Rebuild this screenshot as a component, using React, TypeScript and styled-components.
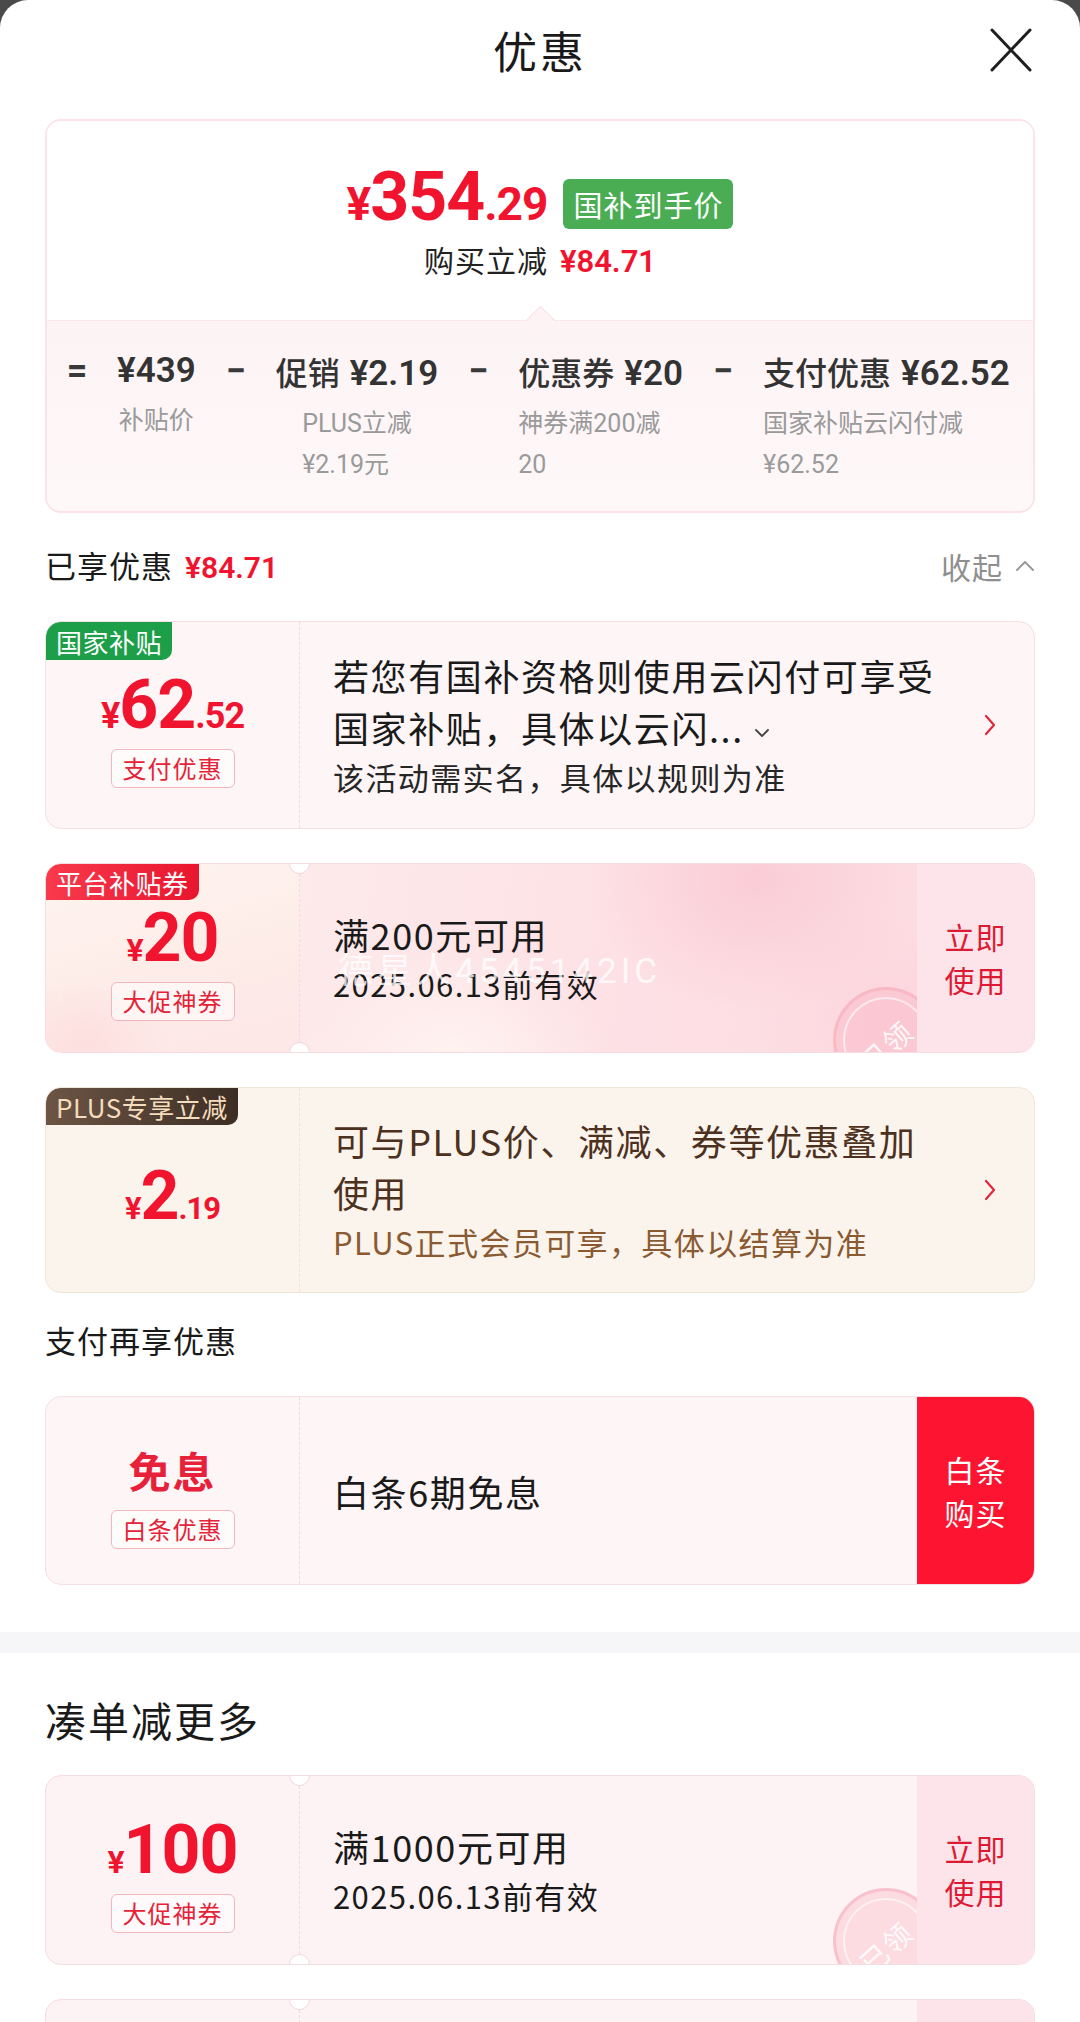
import React from 'react';
import styled, { createGlobalStyle, css } from 'styled-components';

const CJK = `"Noto Sans CJK SC", "Noto Sans", sans-serif`;
const NUM = `Roboto, "Liberation Sans", "Noto Sans CJK SC", sans-serif`;
const RED = '#f0142f';

const GlobalStyle = createGlobalStyle`
  html, body { margin: 0; padding: 0; background: #4a4a4a; }
  body { font-family: ${CJK}; color: #1a1a1a; -webkit-font-smoothing: antialiased; }
  * { box-sizing: border-box; }
`;

const Sheet = styled.div`
  width: 1080px;
  min-height: 2022px;
  background: #fff;
  border-radius: 28px 28px 0 0;
  overflow: hidden;
`;

const Header = styled.header`
  display: grid;
  grid-template-columns: 1fr auto 1fr;
  align-items: center;
  height: 100px;
`;

const Title = styled.h1`
  margin: 0;
  font-size: 44px;
  font-weight: 400;
  letter-spacing: 3px;
  color: #1a1a1a;
  line-height: 1;
`;

const CloseButton = styled.button`
  justify-self: end;
  margin-right: 48px;
  width: 42px;
  height: 44px;
  padding: 0;
  border: 0;
  background: none;
  display: flex;
`;

const Content = styled.div`
  padding: 0 45px;
`;

const Summary = styled.section`
  margin-top: 19px;
  border: 2px solid #fbe3e7;
  border-radius: 16px;
  overflow: hidden;
`;

const SummaryTop = styled.div`
  height: 199px;
  padding-top: 58px;
  display: flex;
  flex-direction: column;
  align-items: center;
  background: #fff;
`;

const PriceLine = styled.div`
  display: flex;
  align-items: flex-end;
  height: 50px;
`;

const BigPrice = styled.div`
  font-family: ${NUM};
  font-weight: 700;
  color: ${RED};
  line-height: 1;
  display: flex;
  align-items: baseline;
  margin-bottom: -2px;
  letter-spacing: -1px;
`;

const PriceUnit = styled.span<{ $size: number }>`
  font-size: ${(p) => p.$size}px;
`;

const GreenBadge = styled.span`
  margin-left: 16px;
  height: 50px;
  padding: 0 10px;
  border-radius: 6px;
  background: #4aad53;
  color: #fff;
  font-size: 29px;
  line-height: 50px;
  letter-spacing: 1px;
`;

const SaveLine = styled.div`
  margin-top: 12px;
  font-size: 30px;
  line-height: 36px;
  color: #222;
  letter-spacing: 1px;
`;

const RedNum = styled.span<{ $size?: number }>`
  font-family: ${NUM};
  color: ${RED};
  font-weight: 600;
  font-size: ${(p) => p.$size ?? 31}px;
  margin-left: 12px;
  letter-spacing: 0;
`;

const Breakdown = styled.div`
  position: relative;
  height: 191px;
  padding: 28px 0 0 17px;
  display: flex;
  align-items: flex-start;
  gap: 27px;
  background: linear-gradient(#fdf3f5, #fef8f9);
  border-top: 1.5px solid #fbe6ea;

  &::before {
    content: '';
    position: absolute;
    top: -11px;
    left: 50%;
    width: 20px;
    height: 20px;
    margin-left: -10px;
    transform: rotate(45deg);
    background: #fdf3f5;
    border-left: 1.5px solid #fbe0e5;
    border-top: 1.5px solid #fbe0e5;
  }
`;

const Op = styled.span`
  width: 26px;
  text-align: center;
  font-family: ${NUM};
  font-size: 36px;
  font-weight: 700;
  line-height: 44px;
  color: #3a3a3a;
`;

const Item = styled.div`
  display: flex;
  flex-direction: column;
  align-items: center;
`;

const ItemMain = styled.div`
  display: flex;
  align-items: baseline;
  gap: 10px;
  font-size: 32px;
  line-height: 44px;
  color: #333;
  white-space: nowrap;
  font-weight: 500;
`;

const ItemNum = styled.span`
  font-family: ${NUM};
  font-weight: 600;
  font-size: 35px;
`;

const ItemSub = styled.div<{ $align: 'center' | 'flex-start' }>`
  align-self: ${(p) => p.$align};
  margin-top: 7px;
  font-family: ${NUM};
  font-size: 25px;
  line-height: 41px;
  color: #9a9a9a;
  white-space: nowrap;
`;

const EnjoyRow = styled.div`
  margin-top: 25px;
  height: 56px;
  display: flex;
  align-items: center;
  justify-content: space-between;
`;

const SectionLabel = styled.div`
  font-size: 31px;
  line-height: 48px;
  color: #1a1a1a;
  letter-spacing: 1px;
`;

const Collapse = styled.div`
  display: flex;
  align-items: center;
  gap: 12px;
  font-size: 30px;
  color: #8f8f8f;
  letter-spacing: 1px;
`;

const CardList = styled.div`
  margin-top: 27px;
  display: flex;
  flex-direction: column;
  gap: 34px;
`;

type Tone = 'rose' | 'cream' | 'promo' | 'coupon';

const toneStyles: Record<Tone, ReturnType<typeof css>> = {
  rose: css`background: #fdf5f6; border-color: #f6e0e3;`,
  cream: css`background: #fbf4ed; border-color: #f2e4d7;`,
  promo: css`background: #fde8ea; border-color: #f7dce0;`,
  coupon: css`background: #fdf3f5; border-color: #f5dde1;`,
};

const Card = styled.article<{ $tone: Tone; $h: number }>`
  position: relative;
  display: grid;
  grid-template-columns: 254px 1fr auto;
  height: ${(p) => p.$h}px;
  border: 1.5px solid;
  border-radius: 16px;
  overflow: hidden;
  ${(p) => toneStyles[p.$tone]}
`;

const Side = styled.div<{ $tone: Tone }>`
  display: flex;
  flex-direction: column;
  align-items: center;
  justify-content: center;
  gap: 14px;
  padding-top: 12px;
  border-right: 1.5px dashed ${(p) => (p.$tone === 'cream' ? '#f0e2d4' : '#f3dadd')};
  ${(p) =>
    p.$tone === 'promo' &&
    css`
      background: radial-gradient(ellipse 120px 90px at 15% 95%, rgba(253, 220, 220, 0.8), transparent 70%),
        linear-gradient(165deg, #fff5f0 0%, #fdece8 55%, #fde7e7 100%);
    `}
`;

const Body = styled.div<{ $tone: Tone }>`
  position: relative;
  display: flex;
  flex-direction: column;
  justify-content: center;
  padding-left: 33px;
  ${(p) =>
    p.$tone === 'promo' &&
    css`
      background: radial-gradient(ellipse 240px 190px at 74% 8%, rgba(250, 200, 210, 0.8), transparent 70%),
        radial-gradient(ellipse 200px 150px at 96% 80%, rgba(251, 208, 218, 0.6), transparent 70%),
        radial-gradient(ellipse 220px 160px at 25% 105%, rgba(255, 244, 240, 0.95), transparent 70%),
        linear-gradient(100deg, #fdeaeb 0%, #fde0e5 55%, #fcdce2 100%);
    `}
`;

const MainText = styled.div<{ $color?: string }>`
  max-width: 612px;
  font-size: 36px;
  line-height: 52px;
  letter-spacing: 1.6px;
  color: ${(p) => p.$color ?? '#1a1a1a'};
`;

const SubText = styled.div<{ $color?: string }>`
  font-size: 31px;
  line-height: 48px;
  letter-spacing: 1.4px;
  color: ${(p) => p.$color ?? '#262626'};
`;

const InlineChevron = styled.svg`
  margin-left: 10px;
  vertical-align: middle;
`;

const ChevronCell = styled.div`
  display: flex;
  align-items: center;
  padding: 0 37px 0 16px;
`;

const Action = styled.div<{ $solid?: boolean }>`
  position: relative;
  z-index: 1;
  width: 117px;
  display: flex;
  flex-direction: column;
  align-items: center;
  justify-content: center;
  font-size: 30px;
  line-height: 43px;
  letter-spacing: 1px;
  background: ${(p) => (p.$solid ? '#fc1430' : '#fde4ea')};
  color: ${(p) => (p.$solid ? '#fff' : '#dd1a34')};
`;

type CornerKind = 'gov' | 'platform' | 'plus';

const cornerStyles: Record<CornerKind, ReturnType<typeof css>> = {
  gov: css`background: #1c9f48; color: #fff; height: 38px;`,
  platform: css`background: linear-gradient(90deg, #f9394c, #e8162e); color: #fff; height: 36px;`,
  plus: css`background: linear-gradient(90deg, #6c5545, #3c2e24); color: #f5dcbd; height: 37px;`,
};

const CornerTag = styled.span<{ $kind: CornerKind }>`
  position: absolute;
  top: 0;
  left: 0;
  z-index: 2;
  display: flex;
  align-items: center;
  padding: 0 10px;
  font-size: 26px;
  letter-spacing: 0.5px;
  border-radius: 14px 0 10px 0;
  ${(p) => cornerStyles[p.$kind]}
`;

const Amount = styled.div`
  font-family: ${NUM};
  font-weight: 700;
  color: ${RED};
  display: flex;
  align-items: baseline;
  line-height: 60px;
  height: 60px;
  letter-spacing: -1px;
`;

const OutlineTag = styled.span`
  height: 39px;
  padding: 0 11px;
  border: 1.5px solid #f1b7bf;
  border-radius: 6px;
  background: rgba(255, 255, 255, 0.55);
  color: #e42338;
  font-size: 24px;
  line-height: 36px;
  letter-spacing: 1px;
`;

const FreeText = styled.div`
  font-size: 42px;
  font-weight: 700;
  line-height: 52px;
  color: #e8213a;
  letter-spacing: 2px;
`;

const Notch = styled.span<{ $pos: 'top' | 'bottom' }>`
  position: absolute;
  left: 243px;
  ${(p) => p.$pos}: -11px;
  width: 21px;
  height: 21px;
  border-radius: 50%;
  background: #fff;
  border: 1.5px solid #f1d5da;
  z-index: 3;
`;

const Stamp = styled.div<{ $top: number }>`
  position: absolute;
  left: 533px;
  top: ${(p) => p.$top}px;
  width: 106px;
  height: 106px;
  border-radius: 50%;
  border: 3px solid rgba(246, 168, 182, 0.5);
  background: rgba(249, 176, 190, 0.35);
  display: flex;
  align-items: center;
  justify-content: center;

  &::before {
    content: '';
    position: absolute;
    inset: 7px;
    border-radius: 50%;
    border: 2px solid rgba(255, 255, 255, 0.6);
  }
`;

const StampText = styled.span`
  transform: rotate(-42deg) translate(-4px, 4px);
  font-size: 28px;
  color: rgba(255, 255, 255, 0.9);
  letter-spacing: 2px;
`;

const Watermark = styled.span`
  position: absolute;
  left: 38px;
  top: 78px;
  z-index: 2;
  font-family: ${NUM};
  font-size: 35px;
  letter-spacing: 4px;
  color: rgba(255, 255, 255, 0.78);
  white-space: nowrap;
  pointer-events: none;
`;

const PayLabel = styled(SectionLabel)`
  margin: 23px 0 32px;
`;

const Band = styled.div`
  margin-top: 47px;
  height: 21px;
  background: #f6f6f8;
`;

const BigTitle = styled.h2`
  margin: 37px 0 0;
  font-size: 41px;
  font-weight: 400;
  line-height: 58px;
  color: #1a1a1a;
  letter-spacing: 2px;
`;

const Chevron = ({ color = '#e0283a' }: { color?: string }) => (
  <svg width="14" height="24" viewBox="0 0 14 24">
    <path d="M3 3 L11 12 L3 21" fill="none" stroke={color} strokeWidth="2.2" strokeLinecap="round" strokeLinejoin="round" />
  </svg>
);

const Price = ({ cur, int, dec, small = 32 }: { cur: string; int: string; dec?: string; small?: number }) => (
  <Amount>
    <PriceUnit $size={small}>{cur}</PriceUnit>
    <PriceUnit $size={68}>{int}</PriceUnit>
    {dec && <PriceUnit $size={small}>{dec}</PriceUnit>}
  </Amount>
);

const CouponCard = ({
  amount,
  tag,
  line1,
  line2,
  corner,
  promo,
  stampTop,
  watermark,
}: {
  amount: string;
  tag: string;
  line1: string;
  line2: string;
  corner?: string;
  promo?: boolean;
  stampTop: number;
  watermark?: string;
}) => {
  const tone: Tone = promo ? 'promo' : 'coupon';
  return (
    <Card $tone={tone} $h={190}>
      {corner && <CornerTag $kind="platform">{corner}</CornerTag>}
      <Notch $pos="top" />
      <Notch $pos="bottom" />
      <Side $tone={tone}>
        <Price cur="¥" int={amount} small={32} />
        <OutlineTag>{tag}</OutlineTag>
      </Side>
      <Body $tone={tone}>
        <MainText>{line1}</MainText>
        <SubText $color="#1a1a1a">{line2}</SubText>
        <Stamp $top={stampTop}>
          <StampText>已领</StampText>
        </Stamp>
        {watermark && <Watermark>{watermark}</Watermark>}
      </Body>
      <Action>
        <span>立即</span>
        <span>使用</span>
      </Action>
    </Card>
  );
};

export default function App() {
  return (
    <>
      <GlobalStyle />
      <Sheet>
        <Header>
          <span />
          <Title>优惠</Title>
          <CloseButton aria-label="关闭">
            <svg width="42" height="44" viewBox="0 0 42 44">
              <path d="M2 2 L40 42 M40 2 L2 42" stroke="#1f1f1f" strokeWidth="3" strokeLinecap="round" />
            </svg>
          </CloseButton>
        </Header>

        <Content>
          <Summary>
            <SummaryTop>
              <PriceLine>
                <BigPrice>
                  <PriceUnit $size={46}>¥</PriceUnit>
                  <PriceUnit $size={68}>354</PriceUnit>
                  <PriceUnit $size={46}>.29</PriceUnit>
                </BigPrice>
                <GreenBadge>国补到手价</GreenBadge>
              </PriceLine>
              <SaveLine>
                购买立减<RedNum>¥84.71</RedNum>
              </SaveLine>
            </SummaryTop>
            <Breakdown>
              <Op>=</Op>
              <Item>
                <ItemMain>
                  <ItemNum>¥439</ItemNum>
                </ItemMain>
                <ItemSub $align="center">补贴价</ItemSub>
              </Item>
              <Op>−</Op>
              <Item>
                <ItemMain>
                  <span>促销</span>
                  <ItemNum>¥2.19</ItemNum>
                </ItemMain>
                <ItemSub $align="center">
                  PLUS立减
                  <br />
                  ¥2.19元
                </ItemSub>
              </Item>
              <Op>−</Op>
              <Item>
                <ItemMain>
                  <span>优惠券</span>
                  <ItemNum>¥20</ItemNum>
                </ItemMain>
                <ItemSub $align="flex-start">
                  神券满200减
                  <br />
                  20
                </ItemSub>
              </Item>
              <Op>−</Op>
              <Item>
                <ItemMain>
                  <span>支付优惠</span>
                  <ItemNum>¥62.52</ItemNum>
                </ItemMain>
                <ItemSub $align="flex-start">
                  国家补贴云闪付减
                  <br />
                  ¥62.52
                </ItemSub>
              </Item>
            </Breakdown>
          </Summary>

          <EnjoyRow>
            <SectionLabel>
              已享优惠<RedNum $size={30}>¥84.71</RedNum>
            </SectionLabel>
            <Collapse>
              收起
              <svg width="20" height="12" viewBox="0 0 20 12">
                <path d="M2 10 L10 2 L18 10" fill="none" stroke="#9a9a9a" strokeWidth="2" strokeLinecap="round" strokeLinejoin="round" />
              </svg>
            </Collapse>
          </EnjoyRow>

          <CardList>
            <Card $tone="rose" $h={208}>
              <CornerTag $kind="gov">国家补贴</CornerTag>
              <Side $tone="rose">
                <Price cur="¥" int="62" dec=".52" small={36} />
                <OutlineTag>支付优惠</OutlineTag>
              </Side>
              <Body $tone="rose">
                <MainText>
                  若您有国补资格则使用云闪付可享受国家补贴，具体以云闪...
                  <InlineChevron width="16" height="10" viewBox="0 0 16 10">
                    <path d="M2 2 L8 8 L14 2" fill="none" stroke="#444" strokeWidth="1.8" strokeLinecap="round" strokeLinejoin="round" />
                  </InlineChevron>
                </MainText>
                <SubText>该活动需实名，具体以规则为准</SubText>
              </Body>
              <ChevronCell>
                <Chevron />
              </ChevronCell>
            </Card>

            <CouponCard
              amount="20"
              tag="大促神券"
              line1="满200元可用"
              line2="2025.06.13前有效"
              corner="平台补贴券"
              promo
              stampTop={123}
              watermark="德星人4545142IC"
            />

            <Card $tone="cream" $h={206}>
              <CornerTag $kind="plus">PLUS专享立减</CornerTag>
              <Side $tone="cream">
                <Price cur="¥" int="2" dec=".19" small={31} />
              </Side>
              <Body $tone="cream">
                <MainText $color="#4d3120">可与PLUS价、满减、券等优惠叠加使用</MainText>
                <SubText $color="#8a5b32">PLUS正式会员可享，具体以结算为准</SubText>
              </Body>
              <ChevronCell>
                <Chevron />
              </ChevronCell>
            </Card>
          </CardList>

          <PayLabel>支付再享优惠</PayLabel>

          <Card $tone="rose" $h={189}>
            <Side $tone="rose">
              <FreeText>免息</FreeText>
              <OutlineTag>白条优惠</OutlineTag>
            </Side>
            <Body $tone="rose">
              <MainText>白条6期免息</MainText>
            </Body>
            <Action $solid>
              <span>白条</span>
              <span>购买</span>
            </Action>
          </Card>
        </Content>

        <Band />

        <Content>
          <BigTitle>凑单减更多</BigTitle>
          <CardList>
            <CouponCard amount="100" tag="大促神券" line1="满1000元可用" line2="2025.06.13前有效" stampTop={112} />
            <CouponCard amount="200" tag="大促神券" line1="满2000元可用" line2="2025.06.13前有效" stampTop={112} />
          </CardList>
        </Content>
      </Sheet>
    </>
  );
}
